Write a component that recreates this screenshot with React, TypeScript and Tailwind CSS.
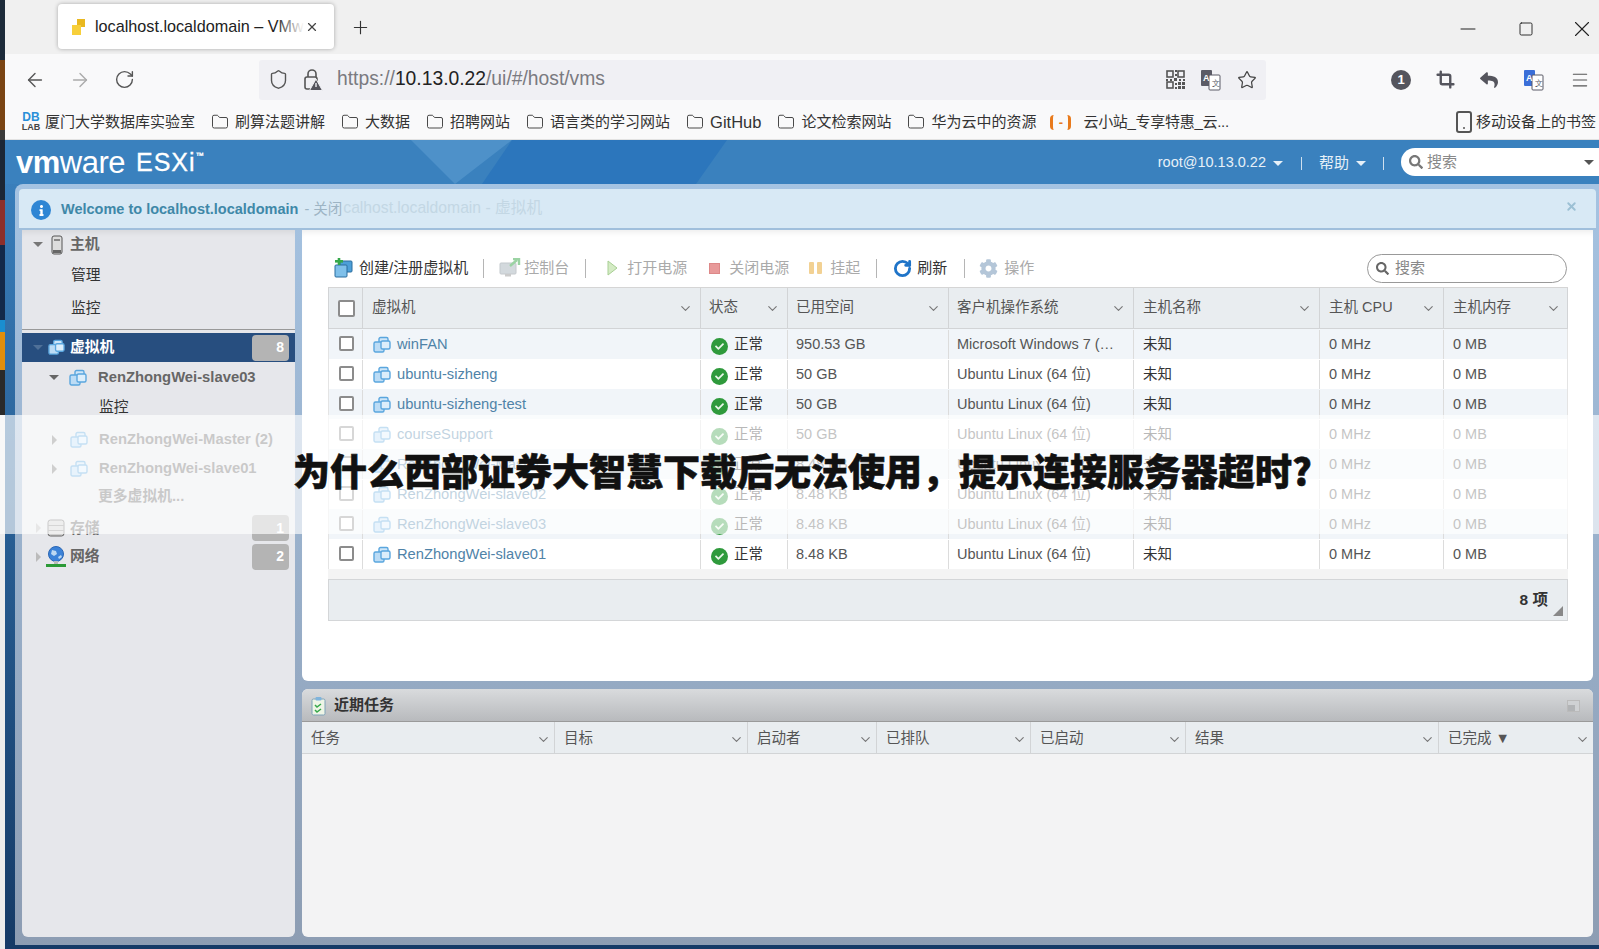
import React from "react";
import { ArrowLeft, ArrowRight, RotateCw, Shield, Star, Menu, Folder, Smartphone, ChevronDown, Crop, Plus, Minus, Square, X } from "lucide-react";
import { FaCog, FaSearch, FaCheck, FaReply, FaInfo } from "react-icons/fa";

const VmIcon = ({ size = 18 }: { size?: number }) => (
  <svg width={size} height={size} viewBox="0 0 18 18" className="shrink-0">
    <rect x="6" y="1.5" width="9" height="8" rx="1.5" fill="#cfe6f8" stroke="#5aa6de" strokeWidth="1.4" />
    <rect x="1" y="6" width="10" height="10" rx="1.5" fill="#bcdcf5" stroke="#5aa6de" strokeWidth="1.4" />
    <rect x="8" y="5" width="9" height="8" rx="1.5" fill="#dceefb" stroke="#5aa6de" strokeWidth="1.4" />
  </svg>
);

const StatusIcon = () => (
  <span className="w-[17px] h-[17px] mt-[3px] rounded-full bg-[#2f9a3c] flex items-center justify-center shrink-0">
    <FaCheck size={9} color="#e8f5e8" />
  </span>
);

const Check = ({ big = false }: { big?: boolean }) => (
  <span className={big ? "block ml-[2px] mt-[1px] w-[17px] h-[17px] rounded-[2px] border-2 border-[#8c8c8c] bg-white" : "block ml-[2px] mb-[3px] w-[15px] h-[15px] rounded-[2px] border-2 border-[#8c8c8c] bg-white"} />
);

const Translate = () => (
  <svg width="22" height="22" viewBox="0 0 22 22">
    <rect x="1" y="1" width="11" height="16" rx="1" fill="#5b5b66" />
    <rect x="9" y="6" width="11" height="15" rx="1" fill="#fff" stroke="#5b5b66" />
    <text x="3" y="12" fontSize="9" fontWeight="700" fill="#fff" fontFamily="Liberation Sans">A</text>
    <text x="12" y="17" fontSize="8" fill="#5b5b66" fontFamily="Liberation Sans">文</text>
  </svg>
);

const TranslateBlue = () => (
  <svg width="22" height="22" viewBox="0 0 22 22">
    <rect x="1" y="1" width="11" height="16" rx="1" fill="#3b6fd8" />
    <rect x="9" y="6" width="11" height="15" rx="1" fill="#fff" stroke="#5b5b66" />
    <text x="3" y="12" fontSize="9" fontWeight="700" fill="#fff" fontFamily="Liberation Sans">A</text>
    <text x="12" y="17" fontSize="8" fill="#5b5b66" fontFamily="Liberation Sans">文</text>
  </svg>
);

const QrDense = () => (
  <svg width="19" height="19" viewBox="0 0 19 19" fill="none">
    <rect x="1" y="1" width="6" height="6" stroke="#555" strokeWidth="1.6" />
    <rect x="12" y="1" width="6" height="6" stroke="#555" strokeWidth="1.6" />
    <rect x="1" y="12" width="6" height="6" stroke="#555" strokeWidth="1.6" />
    <path d="M9 0h2v2H9zM9 4h2v2H9zM0 9h2v2H0zM4 9h2v2H4zM8 8h3v3H8zM13 9h2v2h-2zM17 9h2v2h-2zM9 13h2v2H9zM9 17h2v2H9zM12 12h3v3h-3zM16 12h3v3h-3zM12 16h3v3h-3zM16 16h3v3h-3z" fill="#555" />
  </svg>
);

const LockWarn = () => (
  <svg width="20" height="24" viewBox="0 0 20 24" fill="none">
    <path d="M5 9V6a4 4 0 0 1 8 0v3" stroke="#555" strokeWidth="1.6" />
    <rect x="2" y="9" width="12" height="12" rx="2" stroke="#555" strokeWidth="1.6" />
    <path d="M13 11l6.5 11.5h-13z" fill="#55555d" stroke="#f0f0f4" />
    <path d="M13 15v4" stroke="#f0f0f4" strokeWidth="1.4" />
  </svg>
);

const bookmarks = [
  { t: "刷算法题讲解" },
  { t: "大数据" },
  { t: "招聘网站" },
  { t: "语言类的学习网站" },
  { t: "GitHub", latin: true },
  { t: "论文检索网站" },
  { t: "华为云中的资源" },
];

const strip: [string, string][] = [
  ["h-[60px]", "bg-[#1d2b3a]"],
  ["h-[70px]", "bg-[#7a4413]"],
  ["h-[10px]", "bg-[#3a3a3a]"],
  ["h-[60px]", "bg-[#1c2634]"],
  ["h-[45px]", "bg-[#8c2f2c]"],
  ["h-[75px]", "bg-[#13294a]"],
  ["h-[12px]", "bg-[#1a8ed0]"],
  ["h-[38px]", "bg-[#e08e0b]"],
  ["h-[45px]", "bg-[#2a2a2a]"],
  ["h-[534px]", "bg-[#ececec]"],
];

const columns = ["虚拟机", "状态", "已用空间", "客户机操作系统", "主机名称", "主机 CPU", "主机内存"];

const rows = [
  ["winFAN", "950.53 GB", "Microsoft Windows 7 (…"],
  ["ubuntu-sizheng", "50 GB", "Ubuntu Linux (64 位)"],
  ["ubuntu-sizheng-test", "50 GB", "Ubuntu Linux (64 位)"],
  ["courseSupport", "50 GB", "Ubuntu Linux (64 位)"],
  ["RenZhongWei-Master", "8.48 KB", "Ubuntu Linux (64 位)"],
  ["RenZhongWei-slave02", "8.48 KB", "Ubuntu Linux (64 位)"],
  ["RenZhongWei-slave03", "8.48 KB", "Ubuntu Linux (64 位)"],
  ["RenZhongWei-slave01", "8.48 KB", "Ubuntu Linux (64 位)"],
];

const taskCols = ["任务", "目标", "启动者", "已排队", "已启动", "结果", "已完成 ▼"];

const Caret = ({ cls }: { cls: string }) => (
  <span className={"w-0 h-0 border-x-[5px] border-x-transparent border-t-[5px] " + cls} />
);
const SideCaret = ({ cls }: { cls: string }) => (
  <span className={"w-0 h-0 border-y-[5px] border-y-transparent border-l-[5px] " + cls} />
);

const Badge = ({ n }: { n: string }) => (
  <span className="ml-auto mr-[6px] w-[37px] h-[26px] rounded-[4px] bg-[#b4b4b4] text-white font-bold text-[14px] flex items-center justify-end pr-[5px]">{n}</span>
);

export default function App() {
  return (
    <div className="relative w-[1599px] h-[949px] overflow-hidden flex bg-white text-[14.5px] text-[#555] font-['Liberation_Sans','Noto_Sans_CJK_SC',sans-serif]">
      <div className="w-[5px] shrink-0 flex flex-col">
        {strip.map(([h, c], i) => (
          <div key={i} className={h + " " + c} />
        ))}
      </div>

      <div className="flex-1 min-w-0 flex flex-col">
        {/* tab strip */}
        <div className="h-[54px] shrink-0 bg-[#f0f0f0] flex items-start pl-[53px]">
          <div className="mt-[4px] w-[276px] h-[45px] bg-white rounded-[4px] shadow-[0_0_4px_rgba(0,0,0,0.3)] flex items-center pl-[13px]">
            <svg width="16" height="18" viewBox="0 0 16 18" className="shrink-0">
              <rect x="6" y="1" width="8" height="8" fill="#e9b820" />
              <rect x="1" y="7" width="9" height="10" fill="#f7cf3a" />
            </svg>
            <span className="relative ml-[8px] w-[209px] overflow-hidden whitespace-nowrap text-[16.2px] text-[#222]">
              localhost.localdomain – VMw
              <span className="absolute right-0 top-0 h-full w-[28px] bg-linear-to-r from-white/0 to-white" />
            </span>
            <X size={14} color="#444" className="ml-[1px]" />
          </div>
          <Plus size={21} strokeWidth={1.3} color="#333" className="mt-[17px] ml-[16px]" />
          <div className="ml-auto mt-[16px] flex items-center pr-[4px]">
            <Minus size={24} strokeWidth={1} color="#222" />
            <Square size={16} strokeWidth={1.4} color="#222" className="ml-[38px]" />
            <X size={26} strokeWidth={1} color="#222" className="ml-[35px]" />
          </div>
        </div>

        {/* nav toolbar */}
        <div className="h-[51px] shrink-0 bg-[#f9f9fa] flex items-center pl-[19px]">
          <ArrowLeft size={22} strokeWidth={1.5} color="#555" />
          <ArrowRight size={22} strokeWidth={1.5} color="#aaa" className="ml-[23px]" />
          <RotateCw size={21} strokeWidth={1.6} color="#555" className="ml-[23px]" />
          <div className="ml-[124px] w-[1007px] h-[40px] rounded-[3px] bg-[#f0f0f4] flex items-center pl-[9px]">
            <Shield size={21} strokeWidth={1.6} color="#555" />
            <span className="ml-[14px] flex"><LockWarn /></span>
            <span className="ml-[14px] text-[19.3px] text-[#7a7a80] whitespace-nowrap">
              https://<span className="text-[#222]">10.13.0.22</span>/ui/#/host/vms
            </span>
            <div className="ml-auto flex items-center gap-[15px] pr-[9px]">
              <QrDense />
              <Translate />
              <Star size={20} strokeWidth={1.5} color="#444" />
            </div>
          </div>
          <div className="flex items-center ml-[125px] gap-[25px]">
            <span className="w-[20px] h-[20px] rounded-full bg-[#55555d] text-white text-[13px] font-bold flex items-center justify-center">1</span>
            <Crop size={19} strokeWidth={3} color="#55555d" />
            <FaReply size={18} color="#55555d" />
            <TranslateBlue />
            <Menu size={20} strokeWidth={1.3} color="#555" />
          </div>
        </div>

        {/* bookmarks */}
        <div className="h-[35px] shrink-0 bg-[#f9f9fa] flex items-center pl-[16px] text-[15px] text-[#333] whitespace-nowrap border-b border-[#e2e2e2]">
          <span className="w-[20px] shrink-0 text-[9px] leading-[9px] font-bold text-center">
            <span className="block text-[#2a8fd8] text-[12px] leading-[11px]">DB</span>
            <span className="block text-[#444]">LAB</span>
          </span>
          <span className="ml-[4px]">厦门大学数据库实验室</span>
          {bookmarks.map((b) => (
            <span key={b.t} className="flex items-center ml-[16px]">
              <Folder size={18} strokeWidth={1.3} color="#444" />
              <span className={b.latin ? "ml-[6px] text-[16.5px]" : "ml-[6px]"}>{b.t}</span>
            </span>
          ))}
          <span className="ml-[14px] w-[21px] h-[15px] rounded-[4px] border-x-[3px] border-[#e87a1c] flex items-center justify-center text-[#e87a1c] font-bold text-[13px] leading-none">-</span>
          <span className="ml-[12px] tracking-[-0.3px]">云小站_专享特惠_云...</span>
          <Smartphone size={24} strokeWidth={2} color="#555" className="ml-auto" />
          <span className="mr-[3px]">移动设备上的书签</span>
        </div>

        {/* esxi */}
        <div className="flex-1 min-h-0 flex flex-col bg-linear-to-b from-[#3b82c0] to-[#153a66]">
          <div className="relative h-[44px] shrink-0 bg-[#3a81be] overflow-hidden flex items-center pl-[11px] text-white">
            <svg className="absolute left-0 top-0" width="1594" height="44" viewBox="0 0 1594 44">
              <polygon points="406,0 507,0 450,44" fill="#4e91c9" />
              <polygon points="507,0 722,0 691,44 477,44" fill="#2c76bc" />
            </svg>
            <span className="relative text-[31px] leading-none tracking-[-0.5px] whitespace-nowrap">
              <span className="font-bold">vm</span>ware
            </span>
            <span className="relative ml-[11px] text-[25px] leading-none tracking-[1px] whitespace-nowrap [-webkit-text-stroke:0.3px_#fff]">
              ESXi<sup className="relative -top-[13px] text-[8px]">™</sup>
            </span>
            <div className="relative ml-auto flex items-center text-[14.5px] text-[#e6f0f8] whitespace-nowrap">
              <span className="mt-[2px]">root@10.13.0.22</span>
              <Caret cls="ml-[7px] mt-[2px] border-t-[#e6f0f8]" />
              <span className="ml-[18px] mt-[2px] w-px h-[13px] bg-[#cfe0ef]" />
              <span className="ml-[17px] mt-[2px] text-[15px]">帮助</span>
              <Caret cls="ml-[7px] mt-[2px] border-t-[#e6f0f8]" />
              <span className="ml-[17px] mt-[2px] w-px h-[13px] bg-[#cfe0ef]" />
              <div className="ml-[17px] w-[198px] h-[28px] bg-white rounded-l-full flex items-center pl-[8px] text-[#888] text-[15px]">
                <FaSearch size={14} color="#777" />
                <span className="ml-[4px]">搜索</span>
                <Caret cls="ml-auto mr-[5px] border-t-[#555]" />
              </div>
            </div>
          </div>

          {/* frame */}
          <div className="ml-[10px] h-[761px] shrink-0 rounded-tl-[8px] pt-[5px] pb-[8px] bg-linear-to-b from-[#a5c3e2] to-[#8d9db3] flex flex-col">
            <div className="ml-[4px] mr-[3px] h-[41px] shrink-0 pt-[3px] bg-[#d8e9f5] border-b-2 border-[#a0bfdc] rounded-t-[4px] flex items-center pl-[12px] whitespace-nowrap">
              <span className="w-[20px] h-[20px] rounded-full bg-[#2f86d4] flex items-center justify-center">
                <FaInfo size={11} color="#fff" />
              </span>
              <span className="ml-[10px] font-bold text-[14.5px] text-[#3f88a8]">Welcome to localhost.localdomain</span>
              <span className="ml-[6px] text-[#9db4c4] text-[14.5px]">- 关闭</span>
              <span className="ml-[1px] mb-[5px] text-[#c3d7e4] text-[15.7px]">calhost.localdomain - 虚拟机</span>
              <X size={13} strokeWidth={3.5} color="#9cc0d4" className="ml-auto mr-[18px] mb-[7px]" />
            </div>

            <div className="flex-1 min-h-0 flex pl-[7px] pr-[6px] gap-[7px]">
              {/* sidebar */}
              <div className="w-[273px] shrink-0 bg-[#e6e7eb] rounded-b-[6px] shadow-[inset_0_6px_6px_-4px_rgba(0,0,0,0.08)] flex flex-col text-[14.8px] whitespace-nowrap">
                <div className="h-[29px] flex items-center pl-[11px]">
                  <Caret cls="border-t-[#777]" />
                  <svg width="12" height="20" viewBox="0 0 12 20" className="ml-[8px]">
                    <rect x="1" y="1" width="10" height="18" rx="2" fill="#ddd" stroke="#555" />
                    <rect x="3" y="4" width="6" height="2" fill="#888" />
                    <rect x="2" y="15" width="8" height="3" fill="#666" />
                  </svg>
                  <span className="ml-[7px] font-bold text-[#666]">主机</span>
                </div>
                <div className="h-[28px] mt-[2px] flex items-center pl-[49px] text-[#333]">管理</div>
                <div className="h-[34px] mt-[2px] flex items-center pl-[49px] text-[#333]">监控</div>
                <div className="mt-[4px] h-px shrink-0 bg-[#999]" />
                <div className="mt-[3px] h-[29px] bg-[#274e7f] flex items-center pl-[11px] shrink-0">
                  <Caret cls="border-t-[#4f7098]" />
                  <span className="ml-[5px] flex"><VmIcon size={17} /></span>
                  <span className="ml-[5px] font-bold text-white">虚拟机</span>
                  <Badge n="8" />
                </div>
                <div className="h-[29px] mt-[1px] flex items-center pl-[27px]">
                  <Caret cls="border-t-[#666]" />
                  <span className="ml-[10px] flex"><VmIcon /></span>
                  <span className="ml-[11px] font-bold text-[#666]">RenZhongWei-slave03</span>
                </div>
                <div className="h-[29px] mt-[1px] flex items-center pl-[77px] text-[#333]">监控</div>
                <div className="h-[29px] mt-[3px] flex items-center pl-[30px]">
                  <SideCaret cls="border-l-[#777]" />
                  <span className="ml-[13px] flex"><VmIcon /></span>
                  <span className="ml-[11px] font-bold text-[#666]">RenZhongWei-Master (2)</span>
                </div>
                <div className="h-[29px] flex items-center pl-[30px]">
                  <SideCaret cls="border-l-[#777]" />
                  <span className="ml-[13px] flex"><VmIcon /></span>
                  <span className="ml-[11px] font-bold text-[#666]">RenZhongWei-slave01</span>
                </div>
                <div className="h-[27px] flex items-center pl-[76px] font-bold text-[#666]">更多虚拟机...</div>
                <div className="h-[28px] mt-[4px] flex items-center pl-[14px]">
                  <SideCaret cls="border-l-[#bbb]" />
                  <svg width="18" height="18" viewBox="0 0 18 18" className="ml-[6px]">
                    <rect x="1" y="1" width="16" height="16" rx="2.5" fill="#cfcfcf" stroke="#666" />
                    <path d="M1 6.5h16M1 11.5h16" stroke="#888" />
                  </svg>
                  <span className="ml-[5px] font-bold text-[#666]">存储</span>
                  <Badge n="1" />
                </div>
                <div className="h-[29px] flex items-center pl-[14px]">
                  <SideCaret cls="border-l-[#bbb]" />
                  <svg width="20" height="21" viewBox="0 0 20 21" className="ml-[5px]">
                    <circle cx="10" cy="8" r="7.5" fill="#3b82d8" stroke="#2a66b4" />
                    <path d="M6 4l4 1 1 3-3 2-3-2zM12 11l3-2 1 2-3 2z" fill="#bcd8f2" />
                    <rect x="8" y="15" width="4" height="3" fill="#bbb" />
                    <rect x="0" y="18" width="20" height="3" fill="#2b9a37" />
                  </svg>
                  <span className="ml-[4px] font-bold text-[#666]">网络</span>
                  <Badge n="2" />
                </div>
              </div>

              <div className="flex-1 min-w-0 flex flex-col gap-[8px]">
                {/* main panel */}
                <div className="h-[451px] shrink-0 bg-white rounded-b-[6px] shadow-[inset_0_6px_6px_-4px_rgba(0,0,0,0.08)]">
                  <div className="h-[57px] pt-[19px] pl-[30px] pr-[26px] flex items-center whitespace-nowrap text-[15px]">
                    <svg width="21" height="20" viewBox="0 0 21 20" className="shrink-0">
                      <rect x="8" y="3" width="12" height="11" rx="1" fill="#4d9fd8" stroke="#2b6d9e" />
                      <rect x="3" y="7" width="12" height="12" rx="1" fill="#7fc0ea" stroke="#2b6d9e" />
                      <rect x="3" y="2" width="8" height="2.6" fill="#35a84a" />
                      <rect x="5.7" y="0" width="2.6" height="7" fill="#35a84a" />
                    </svg>
                    <span className="ml-[6px] text-[#333]">创建/注册虚拟机</span>
                    <span className="ml-[15px] w-px h-[19px] bg-[#b5b5b5] shrink-0" />
                    <svg width="22" height="20" viewBox="0 0 22 20" className="ml-[15px] shrink-0 opacity-50">
                      <rect x="1" y="5" width="16" height="11" rx="1" fill="#a9b4bd" stroke="#8a949c" />
                      <rect x="6" y="16" width="6" height="2.5" fill="#999" />
                      <path d="M11 8l7-6M14 1h6v6" stroke="#3aa84a" strokeWidth="2.4" fill="none" />
                    </svg>
                    <span className="ml-[3px] text-[#aaa]">控制台</span>
                    <span className="ml-[16px] w-px h-[19px] bg-[#b5b5b5] shrink-0" />
                    <svg width="11" height="16" viewBox="0 0 11 16" className="ml-[21px] shrink-0">
                      <path d="M1 1l9 7-9 7z" fill="#d4ebc4" stroke="#a8cf94" />
                    </svg>
                    <span className="ml-[9px] text-[#aaa]">打开电源</span>
                    <span className="ml-[22px] w-[11px] h-[11px] bg-[#e89a9a] border border-[#d88] shrink-0" />
                    <span className="ml-[9px] text-[#aaa]">关闭电源</span>
                    <span className="ml-[20px] flex gap-[3px] shrink-0">
                      <span className="w-[5px] h-[12px] rounded-[1px] bg-[#f2d193]" />
                      <span className="w-[5px] h-[12px] rounded-[1px] bg-[#f2d193]" />
                    </span>
                    <span className="ml-[8px] text-[#aaa]">挂起</span>
                    <span className="ml-[16px] w-px h-[19px] bg-[#b5b5b5] shrink-0" />
                    <RotateCw size={19} strokeWidth={3.6} color="#1f74c8" className="ml-[16px] shrink-0" />
                    <span className="ml-[5px] text-[#333]">刷新</span>
                    <span className="ml-[17px] w-px h-[19px] bg-[#b5b5b5] shrink-0" />
                    <FaCog size={19} color="#b4c6d8" className="ml-[14px] shrink-0" />
                    <span className="ml-[6px] text-[#aaa]">操作</span>
                    <div className="ml-auto w-[200px] h-[29px] rounded-full border border-[#999] flex items-center pl-[8px] text-[#888]">
                      <FaSearch size={13} color="#666" />
                      <span className="ml-[6px]">搜索</span>
                    </div>
                  </div>

                  <div className="ml-[26px] w-[1240px] border-t border-[#d5d5d5]">
                    <div className="h-[41px] bg-[#e9edf0] border-x border-b border-[#d2d4d6] grid grid-cols-[34px_338px_87px_161px_185px_186px_124px_124px]">
                      <div className="flex items-center justify-center border-r border-[#d2d4d6]"><Check big /></div>
                      {columns.map((c, i) => (
                        <div key={c} className={(i < columns.length - 1 ? "border-r border-[#d2d4d6] " : "") + (i >= 4 ? "pl-[9px] " : "pl-[8px] ") + "flex items-center pr-[7px] text-[#555] whitespace-nowrap"}>
                          <span className={i === 0 ? "ml-[1px]" : ""}>{c}</span>
                          <ChevronDown size={15} strokeWidth={1.8} color="#777" className="ml-auto" />
                        </div>
                      ))}
                    </div>
                    {rows.map((r, i) => (
                      <div key={r[0]} className={(i % 2 === 0 ? "bg-[#f1f5f9] " : "bg-white ") + "h-[30px] pt-[1px] border-x border-[#e4e4e4] grid grid-cols-[34px_338px_87px_161px_185px_186px_124px_124px] items-stretch whitespace-nowrap"}>
                        <div className="flex items-center justify-center border-r border-[#dcdcdc]"><Check /></div>
                        <div className="flex items-center pl-[10px] border-r border-[#dcdcdc] text-[#4f83a8] text-[14.7px]">
                          <VmIcon />
                          <span className="ml-[6px]">{r[0]}</span>
                        </div>
                        <div className="flex items-center pl-[10px] border-r border-[#dcdcdc]">
                          <StatusIcon />
                          <span className="ml-[6px] text-[#333]">正常</span>
                        </div>
                        <div className="flex items-center pl-[8px] border-r border-[#dcdcdc]">{r[1]}</div>
                        <div className="flex items-center pl-[8px] border-r border-[#dcdcdc]">{r[2]}</div>
                        <div className="flex items-center pl-[9px] border-r border-[#dcdcdc] text-[#333]">未知</div>
                        <div className="flex items-center pl-[9px] border-r border-[#dcdcdc]">0 MHz</div>
                        <div className="flex items-center pl-[9px]">0 MB</div>
                      </div>
                    ))}
                    <div className="h-[10px] bg-[#f4f4f4]" />
                    <div className="relative h-[42px] bg-[#e9edf0] border border-[#d4d6d8] flex items-center justify-end pr-[19px] font-bold text-[15.5px] text-[#333]">
                      8 项
                      <svg width="10" height="10" viewBox="0 0 10 10" className="absolute right-[4px] bottom-[4px]">
                        <path d="M10 0v10H0z" fill="#888" />
                      </svg>
                    </div>
                  </div>
                </div>

                {/* tasks */}
                <div className="flex-1 min-h-0 bg-[#f3f3f4] rounded-[6px] overflow-hidden">
                  <div className="h-[33px] pt-[1px] bg-linear-to-b from-[#d9dbdd] to-[#b8babd] border-b border-[#9a9a9a] flex items-center pl-[9px]">
                    <svg width="15" height="20" viewBox="0 0 15 20">
                      <rect x="1" y="3" width="13" height="16" rx="1.5" fill="#eef5e6" stroke="#7ea2b8" />
                      <rect x="4.5" y="1" width="6" height="3.5" rx="1" fill="#7fb4dc" />
                      <path d="M4 9l2 2 4-3M4 14l2 2 4-3" stroke="#35a84a" strokeWidth="1.5" fill="none" />
                    </svg>
                    <span className="ml-[8px] font-bold text-[15px] text-[#333]">近期任务</span>
                    <span className="ml-auto mr-[13px] w-[13px] h-[12px] bg-[#cfd1d3] border border-[#bbb] relative">
                      <span className="absolute left-0 bottom-0 w-[7px] h-[6px] bg-[#b2b4b6]" />
                    </span>
                  </div>
                  <div className="h-[32px] bg-[#e9edf0] border-b border-[#d2d4d6] grid grid-cols-[253px_193px_129px_154px_155px_253px_154px]">
                    {taskCols.map((c, i) => (
                      <div key={c} className={(i < taskCols.length - 1 ? "border-r border-[#d2d4d6] " : "") + "flex items-center pl-[9px] pr-[3px] pt-[3px] whitespace-nowrap text-[#555]"}>
                        <span>{c}</span>
                        <ChevronDown size={15} strokeWidth={1.8} color="#777" className="ml-auto" />
                      </div>
                    ))}
                  </div>
                </div>
              </div>
            </div>
          </div>
          <div className="h-[4px] shrink-0" />
        </div>
      </div>

      {/* headline band */}
      <div className="absolute left-0 top-[415px] w-full h-[119px] bg-white/65 flex items-center justify-center pl-[6px] pb-[8px]">
        <span className="text-[37px] font-black text-[#111] whitespace-nowrap [-webkit-text-stroke:0.6px_#111] font-['Noto_Sans_CJK_SC',sans-serif]">为什么西部证券大智慧下载后无法使用，提示连接服务器超时?</span>
      </div>
    </div>
  );
}
